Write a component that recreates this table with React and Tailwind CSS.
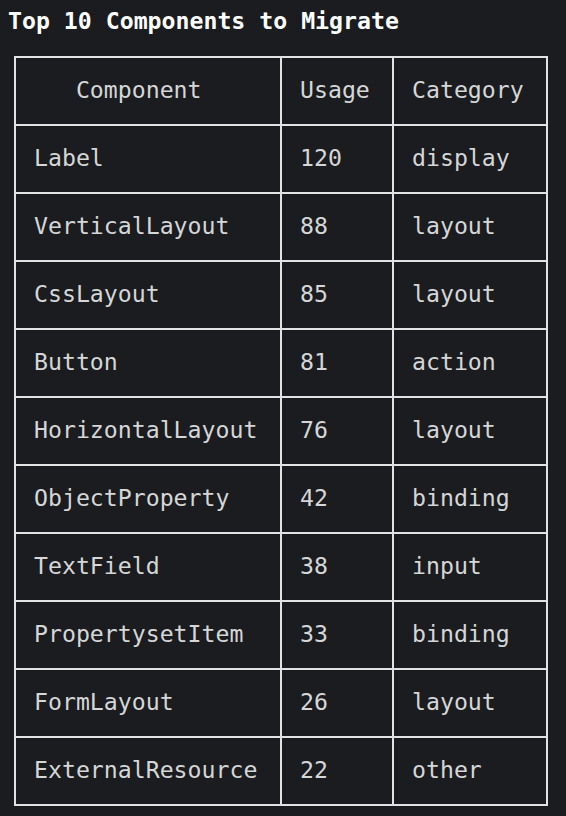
import React from "react";

const rows = [
  ["Label", "120", "display"],
  ["VerticalLayout", "88", "layout"],
  ["CssLayout", "85", "layout"],
  ["Button", "81", "action"],
  ["HorizontalLayout", "76", "layout"],
  ["ObjectProperty", "42", "binding"],
  ["TextField", "38", "input"],
  ["PropertysetItem", "33", "binding"],
  ["FormLayout", "26", "layout"],
  ["ExternalResource", "22", "other"],
];

const cell = "border-2 border-[#e2e2e2] h-[68px] px-[18px] pb-[3px] align-middle text-left font-normal";

export default function App() {
  return (
    <div
      className="min-h-[816px] w-[566px] bg-[#1a1c20] text-[#d6d6d6] pt-[7px]"
      style={{ fontFamily: '"DejaVu Sans Mono", "Liberation Mono", monospace' }}
    >
      <div className="pl-[8px] text-[23.2px] leading-[28px] font-bold text-white">
        Top 10 Components to Migrate
      </div>
      <table className="mt-[21px] ml-[14px] border-collapse text-[23.2px] leading-[28px]">
        <colgroup>
          <col className="w-[266px]" />
          <col className="w-[112px]" />
          <col className="w-[154px]" />
        </colgroup>
        <thead>
          <tr>
            <th className={cell + " whitespace-pre"}>{"   Component"}</th>
            <th className={cell}>Usage</th>
            <th className={cell}>Category</th>
          </tr>
        </thead>
        <tbody>
          {rows.map((r) => (
            <tr key={r[0]}>
              <td className={cell}>{r[0]}</td>
              <td className={cell}>{r[1]}</td>
              <td className={cell}>{r[2]}</td>
            </tr>
          ))}
        </tbody>
      </table>
    </div>
  );
}
